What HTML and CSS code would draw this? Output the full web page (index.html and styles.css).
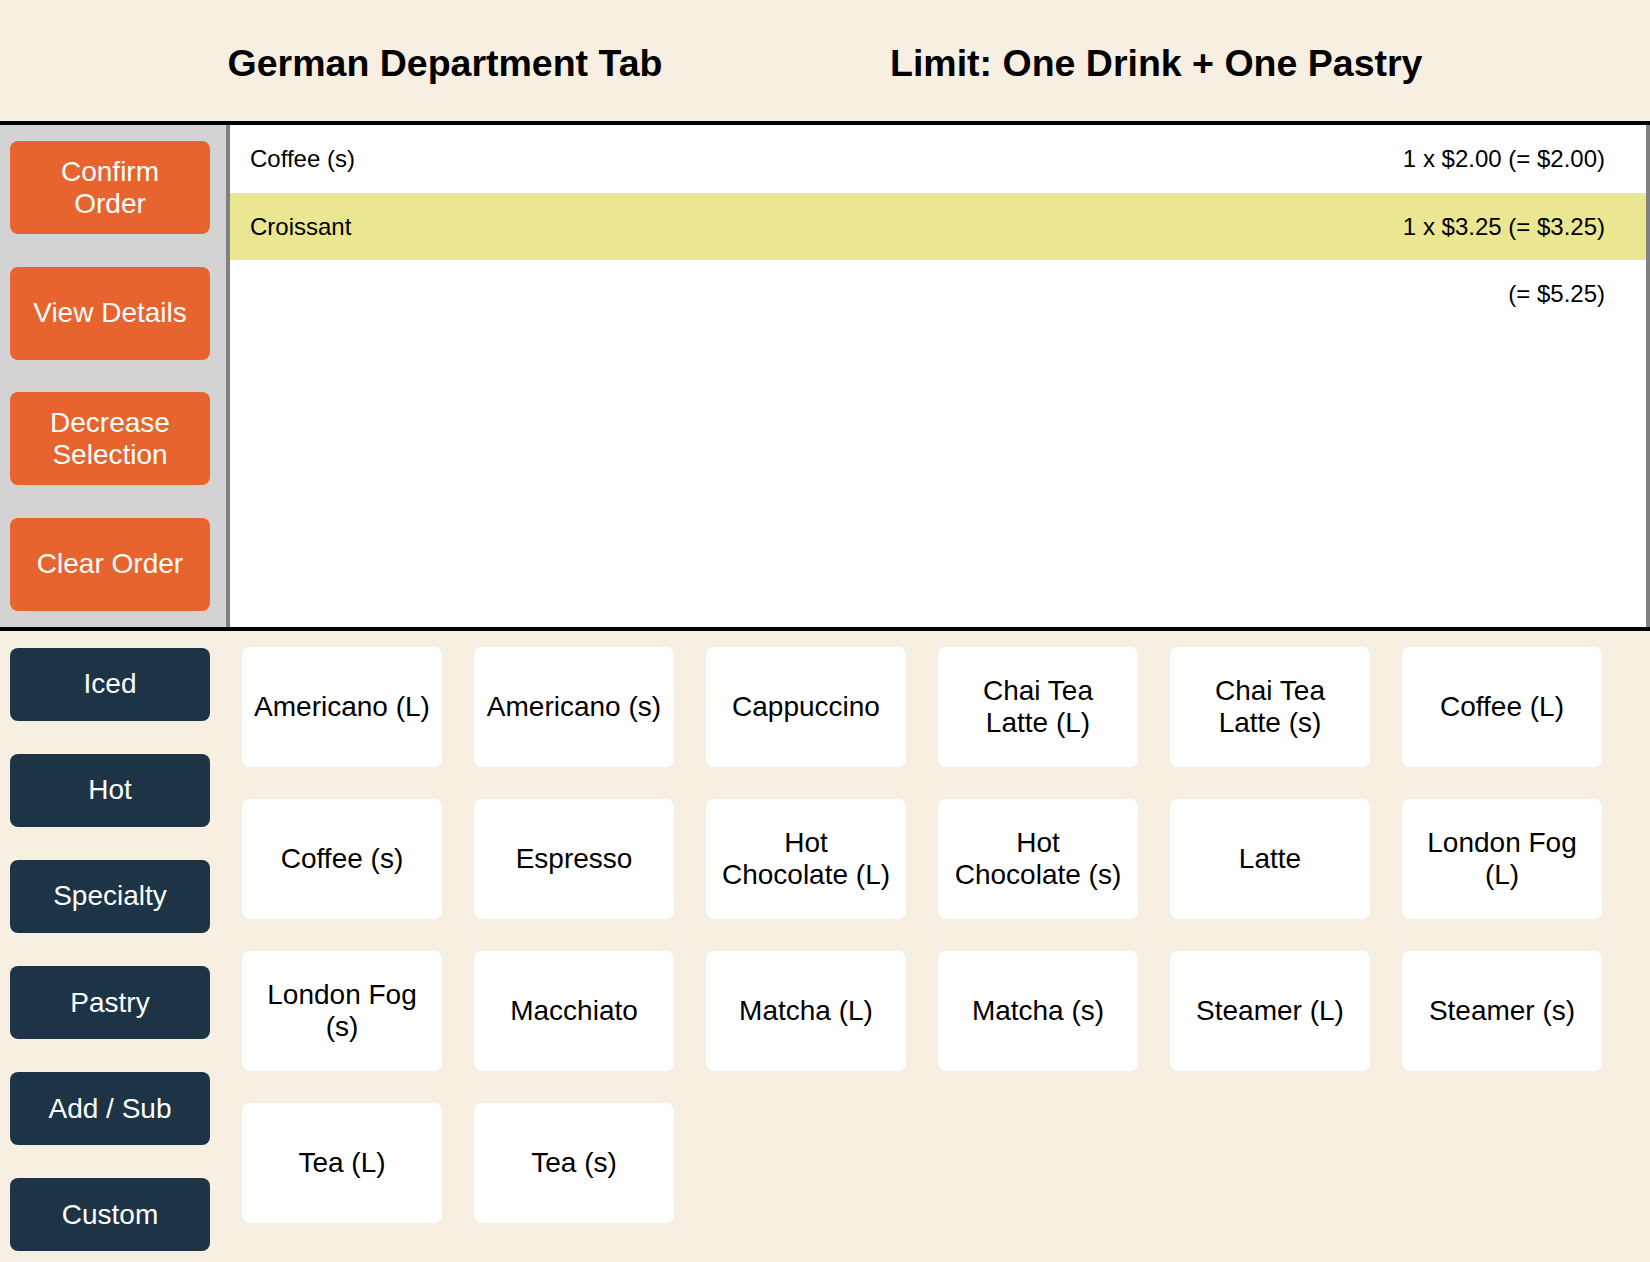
FILE: index.html
```html
<!DOCTYPE html>
<html lang="en">
<head>
<meta charset="utf-8">
<title>German Department Tab</title>
<link rel="stylesheet" href="styles.css">
</head>
<body>
<header class="header">
  <h1 class="title">German Department Tab</h1>
  <h1 class="title">Limit: One Drink + One Pastry</h1>
</header>
<section class="middle">
  <nav class="actions">
    <div class="btn btn-orange">Confirm<br>Order</div>
    <div class="btn btn-orange">View Details</div>
    <div class="btn btn-orange">Decrease<br>Selection</div>
    <div class="btn btn-orange">Clear Order</div>
  </nav>
  <div class="order">
    <div class="row"><span>Coffee (s)</span><span>1 x $2.00 (= $2.00)</span></div>
    <div class="row row-selected"><span>Croissant</span><span>1 x $3.25 (= $3.25)</span></div>
    <div class="row row-total"><span>(= $5.25)</span></div>
  </div>
</section>
<section class="bottom">
  <nav class="categories">
    <div class="btn btn-navy">Iced</div>
    <div class="btn btn-navy">Hot</div>
    <div class="btn btn-navy">Specialty</div>
    <div class="btn btn-navy">Pastry</div>
    <div class="btn btn-navy">Add / Sub</div>
    <div class="btn btn-navy">Custom</div>
  </nav>
  <div class="grid">
    <div class="item">Americano (L)</div>
    <div class="item">Americano (s)</div>
    <div class="item">Cappuccino</div>
    <div class="item">Chai Tea<br>Latte (L)</div>
    <div class="item">Chai Tea<br>Latte (s)</div>
    <div class="item">Coffee (L)</div>
    <div class="item">Coffee (s)</div>
    <div class="item">Espresso</div>
    <div class="item">Hot<br>Chocolate (L)</div>
    <div class="item">Hot<br>Chocolate (s)</div>
    <div class="item">Latte</div>
    <div class="item">London Fog<br>(L)</div>
    <div class="item">London Fog<br>(s)</div>
    <div class="item">Macchiato</div>
    <div class="item">Matcha (L)</div>
    <div class="item">Matcha (s)</div>
    <div class="item">Steamer (L)</div>
    <div class="item">Steamer (s)</div>
    <div class="item">Tea (L)</div>
    <div class="item">Tea (s)</div>
  </div>
</section>
</body>
</html>
```
FILE: styles.css
```css
* { box-sizing: border-box; }
html, body {
  margin: 0;
  padding: 0;
}
body {
  background: #f7efe1;
  font-family: "Liberation Sans", Arial, Helvetica, sans-serif;
  color: #000;
  width: 1650px;
  height: 1262px;
  overflow: hidden;
}
.header {
  height: 121px;
  padding-top: 5px;
  display: flex;
  justify-content: space-evenly;
  align-items: center;
}
.title {
  margin: 0;
  font-size: 37.5px;
  font-weight: bold;
}
.middle {
  display: flex;
  height: 510px;
  border-top: 4px solid #000;
  border-bottom: 4px solid #000;
}
.actions {
  width: 230px;
  background: #d3d3d3;
  border-right: 4px solid #808080;
  display: flex;
  flex-direction: column;
  justify-content: space-around;
  padding-left: 10px;
}
.btn {
  width: 200px;
  border-radius: 8px;
  color: #fff;
  font-size: 28px;
  line-height: 32px;
  text-align: center;
  display: flex;
  align-items: center;
  justify-content: center;
}
.btn-orange {
  height: 93px;
  background: #e8642e;
}
.btn-navy {
  height: 73px;
  background: #1c3445;
}
.order {
  flex: 1;
  background: #fff;
  border-right: 4px solid #808080;
}
.row {
  display: flex;
  justify-content: space-between;
  padding: 20px 41px 20px 20px;
  font-size: 24px;
  line-height: 27.6px;
}
.row-selected {
  background: #ebe691;
}
.row-total {
  justify-content: flex-end;
}
.bottom {
  display: flex;
  height: 637px;
  flex-shrink: 0;
}
.categories {
  width: 226px;
  display: flex;
  flex-direction: column;
  justify-content: space-around;
  padding-left: 10px;
}
.grid {
  display: grid;
  grid-template-columns: repeat(6, 200px);
  grid-auto-rows: 120px;
  gap: 32px;
  padding: 16px;
  align-content: start;
}
.item {
  background: #fff;
  border-radius: 8px;
  font-size: 28px;
  line-height: 32px;
  text-align: center;
  display: flex;
  align-items: center;
  justify-content: center;
}
```
